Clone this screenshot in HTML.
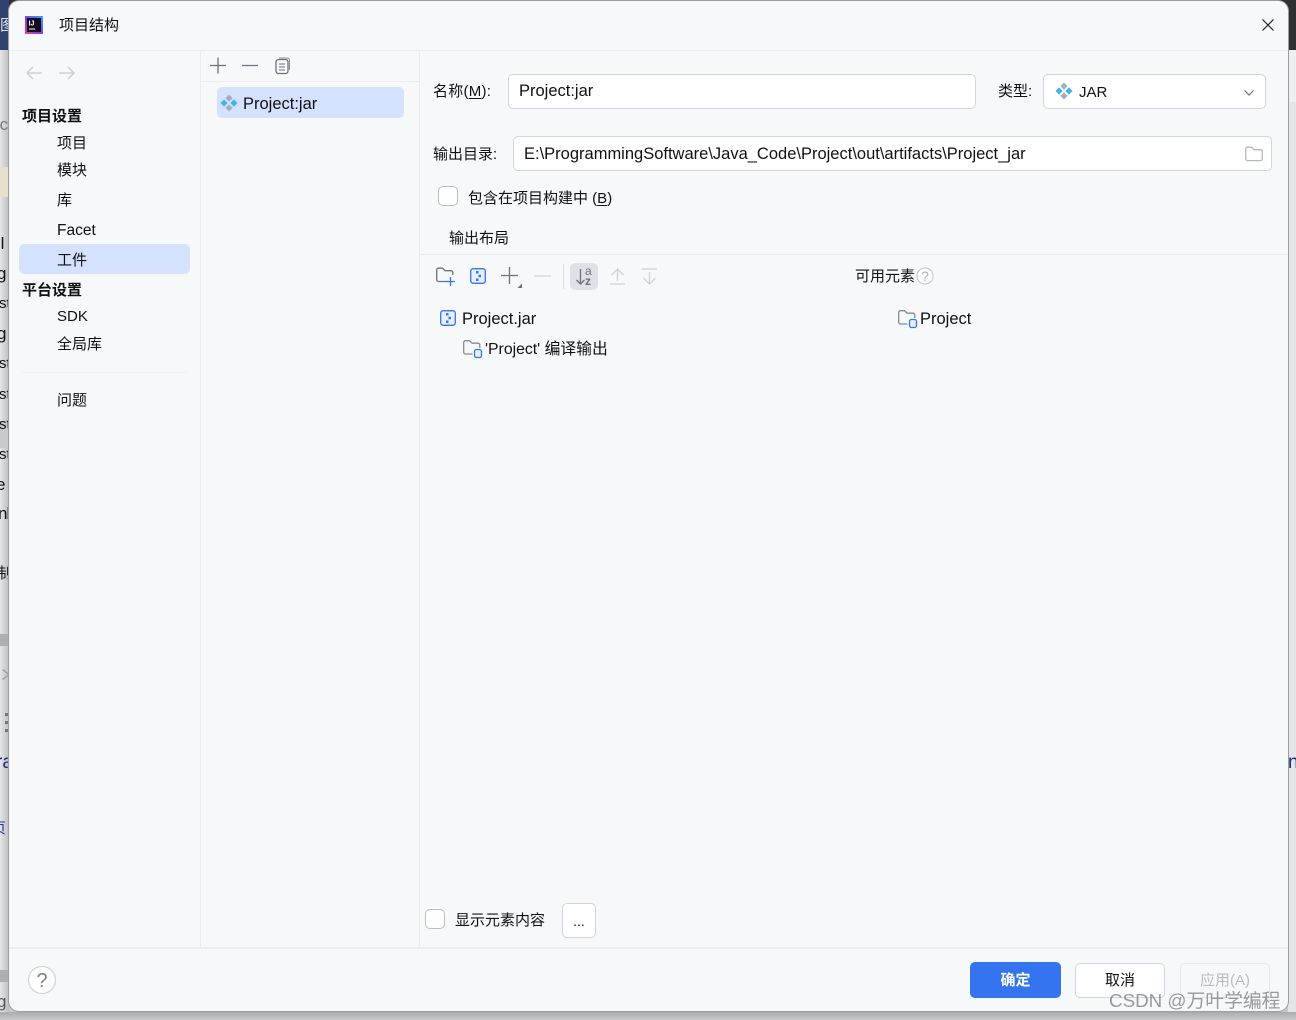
<!DOCTYPE html>
<html lang="zh"><head><meta charset="utf-8"><title>项目结构</title>
<style>
html,body{margin:0;padding:0;width:1296px;height:1020px;overflow:hidden;background:#c8c9cb;}
*{box-sizing:border-box;}
body{font-family:"Liberation Sans","Noto Sans CJK SC",sans-serif;font-size:15px;color:#111;position:relative;}
.a{position:absolute;white-space:nowrap;line-height:24px;}
.b{font-weight:700;}
.s{font-size:17px;}
.st{font-size:15px;left:-1px;width:10px;overflow:hidden;}
.box{position:absolute;background:#fff;border:1.5px solid #d3d5de;border-radius:5px;}
.ln{position:absolute;background:#ebecf0;}
svg{position:absolute;overflow:visible;fill:none;}
u{text-underline-offset:2px;}
</style></head><body>
<!-- background behind dialog -->
<div class="a" style="left:0;top:0;width:1296px;height:50px;background:#2f3034;"></div>
<div class="a" style="left:0;top:0;width:9px;height:50px;background:#2f4270;"></div>
<div class="a" style="left:0;top:50px;width:9px;height:970px;background:linear-gradient(90deg,#e6e6e8,#bcbdbf);"></div>
<div class="a" style="left:1288px;top:50px;width:8px;height:970px;background:#e4e5e8;"></div>
<div class="a" style="left:1288px;top:50px;width:8px;height:52px;background:#eeeff1;"></div>
<div class="a" style="left:1288px;top:122px;width:8px;height:50px;background:#e3e5e9;"></div>
<div class="a" style="left:0;top:1012px;width:1296px;height:8px;background:linear-gradient(180deg,#a9aaac,#c8c9cb);"></div>
<div class="a" style="left:0;top:167px;width:9px;height:30px;background:#e6e1cd;"></div>
<div class="a" style="left:0;top:422px;width:9px;height:26px;background:#c9cacc;"></div>
<div class="a" style="left:0;top:634px;width:9px;height:12px;background:#aeafb1;"></div>
<div class="a" style="left:0;top:970px;width:9px;height:12px;background:#aeafb1;"></div>
<div class="a" style="left:0;top:14px;font-size:15px;color:#dfe3ea;width:9px;overflow:hidden;">图</div>
<div class="a s" style="left:-6px;top:113px;color:#777;width:15px;overflow:hidden;">rc</div>
<div class="a s" style="left:-5px;top:232px;width:14px;overflow:hidden;">-l</div>
<div class="a s" style="left:-3px;top:262px;width:12px;overflow:hidden;">g</div>
<div class="a st" style="top:292px;">st</div>
<div class="a s" style="left:-3px;top:322px;width:12px;overflow:hidden;">g</div>
<div class="a st" style="top:352px;">st</div>
<div class="a st" style="top:383px;">st</div>
<div class="a st" style="top:413px;">st</div>
<div class="a st" style="top:443px;">st</div>
<div class="a s" style="left:-4px;top:473px;width:13px;overflow:hidden;">e</div>
<div class="a s" style="left:-2px;top:502px;width:11px;overflow:hidden;letter-spacing:-1px;">nl</div>
<div class="a" style="left:-3px;top:562px;width:12px;overflow:hidden;">制</div>
<svg style="left:2px;top:669px" width="7" height="11" viewBox="0 0 7 11"><path d="M.5.500L7 5.500.5 10.500" stroke="#9a9ba0" stroke-width="1.200"/></svg>
<div class="a" style="left:5px;top:713px;width:3px;height:3px;background:#777;box-shadow:0 8px #777,0 16px #777;"></div>
<div class="a" style="left:-4px;top:751px;width:13px;overflow:hidden;color:#1b2a80;font-size:19px;">ra</div>
<div class="a" style="left:-9px;top:817px;width:18px;overflow:hidden;color:#2a35a0;">页</div>
<div class="a" style="left:-3px;top:990px;width:12px;overflow:hidden;color:#555;font-size:17px;">g</div>
<div class="a" style="left:1288px;top:751px;width:8px;overflow:hidden;color:#1b2a80;font-size:19px;">n</div>

<!-- dialog -->
<div class="a" style="left:9px;top:1px;width:1279px;height:1010px;background:#f7f8fa;border-radius:10px;box-shadow:0 0 0 1px #9c9d9f;"></div>
<div class="ln" style="left:9px;top:50px;width:1279px;height:1px;"></div>
<div class="ln" style="left:200px;top:51px;width:1px;height:896px;"></div>
<div class="ln" style="left:419px;top:51px;width:1px;height:896px;"></div>
<div class="ln" style="left:201px;top:81px;width:218px;height:1px;"></div>
<div class="ln" style="left:420px;top:254px;width:868px;height:1px;"></div>
<div class="ln" style="left:9px;top:947px;width:1279px;height:2px;"></div>
<div class="ln" style="left:22px;top:372px;width:165px;height:1px;background:#eff0f3;"></div>

<!-- title bar -->
<svg style="left:25px;top:16px" width="18" height="18" viewBox="0 0 18 18">
<defs><linearGradient id="g" x1="0" y1="1" x2="1" y2="0"><stop offset="0" stop-color="#ff3d6e"/><stop offset=".45" stop-color="#7a3cf0"/><stop offset="1" stop-color="#2aa8ff"/></linearGradient></defs>
<rect width="18" height="18" fill="url(#g)"/><rect x="2" y="2" width="14" height="14" fill="#140a22"/>
<rect x="4" y="12.500" width="6" height="1" fill="#fff"/>
<text x="3.600" y="9.500" font-size="7" font-weight="700" fill="#fff" font-family="Liberation Sans">IJ</text></svg>
<div class="a" style="left:59px;top:14px;">项目结构</div>
<svg style="left:1262px;top:19px" width="12" height="12" viewBox="0 0 12 12"><path d="M.5.5l11 11M11.500.5l-11 11" stroke="#222" stroke-width="1.200"/></svg>

<!-- left nav -->
<svg style="left:26px;top:66px" width="50" height="14" viewBox="0 0 50 14"><path d="M1 7h15M7 1L1 7l6 6M33 7h15M42 1l6 6-6 6" stroke="#cdcfd3" stroke-width="1.500"/></svg>
<div class="a b" style="left:22px;top:105px;">项目设置</div>
<div class="a" style="left:57px;top:132px;">项目</div>
<div class="a" style="left:57px;top:159px;">模块</div>
<div class="a" style="left:57px;top:189px;">库</div>
<div class="a" style="left:57px;top:219px;font-size:15.500px;">Facet</div>
<div class="a" style="left:19px;top:244px;width:171px;height:30px;background:#d4e2ff;border-radius:5px;"></div>
<div class="a" style="left:57px;top:249px;">工件</div>
<div class="a b" style="left:22px;top:279px;">平台设置</div>
<div class="a" style="left:57px;top:305px;">SDK</div>
<div class="a" style="left:57px;top:333px;">全局库</div>
<div class="a" style="left:57px;top:389px;">问题</div>

<!-- middle column -->
<svg style="left:209px;top:57px" width="84" height="18" viewBox="0 0 84 18">
<path d="M9 .5v16M1 8.500h16M33 8.500h16" stroke="#6c707e" stroke-width="1.300"/>
<rect x="67" y="2.500" width="12" height="14" rx="2.500" stroke="#6c707e" stroke-width="1.300"/>
<path d="M70 7h6M70 10h6M70 13h6" stroke="#6c707e"/><path d="M70 1h8a2.500 2.500 0 0 1 2.500 2.500V13" stroke="#8b8e99"/></svg>
<div class="a" style="left:217px;top:87px;width:187px;height:31px;background:#d4e2ff;border-radius:5px;"></div>
<svg style="left:220px;top:94px" width="18" height="18" viewBox="0 0 18 18"><path d="M9 .5l3.600 3.600L9 7.700 5.400 4.100z" fill="#a8adbd"/><path d="M9 10.300l3.600 3.600L9 17.500l-3.600-3.600z" fill="#a8adbd"/><path d="M4.100 5.400l3.600 3.600-3.600 3.600L.5 9z" fill="#40b6e0"/><path d="M13.900 5.400L17.500 9l-3.600 3.600L10.300 9z" fill="#40b6e0"/></svg>
<div class="a" style="left:243px;top:92px;font-size:16.500px;">Project:jar</div>

<!-- form -->
<div class="a" style="left:433px;top:80px;letter-spacing:.25px;">名称(<u>M</u>):</div>
<div class="box" style="left:508px;top:74px;width:468px;height:35px;"></div>
<div class="a" style="left:519px;top:79px;font-size:16.500px;">Project:jar</div>
<div class="a" style="left:998px;top:80px;">类型:</div>
<div class="box" style="left:1043px;top:74px;width:223px;height:35px;"></div>
<svg style="left:1055px;top:82px" width="18" height="18" viewBox="0 0 18 18"><path d="M9 .5l3.600 3.600L9 7.700 5.400 4.100z" fill="#a8adbd"/><path d="M9 10.300l3.600 3.600L9 17.500l-3.600-3.600z" fill="#a8adbd"/><path d="M4.100 5.400l3.600 3.600-3.600 3.600L.5 9z" fill="#40b6e0"/><path d="M13.900 5.400L17.500 9l-3.600 3.600L10.300 9z" fill="#40b6e0"/></svg>
<div class="a" style="left:1079px;top:81px;font-size:15px;">JAR</div>
<svg style="left:1244px;top:90px" width="10" height="6" viewBox="0 0 10 6"><path d="M.5.500L5 5 9.500.500" stroke="#6c707e" stroke-width="1.200"/></svg>
<div class="a" style="left:433px;top:143px;">输出目录:</div>
<div class="box" style="left:513px;top:136px;width:759px;height:35px;"></div>
<div class="a" style="left:524px;top:142px;font-size:16.500px;">E:\ProgrammingSoftware\Java_Code\Project\out\artifacts\Project_jar</div>
<svg style="left:1245px;top:146px" width="18" height="16" viewBox="0 0 18 16"><path d="M.7 3A1.800 1.800 0 0 1 2.500 1.200h4L9 3.700h6.500a1.800 1.800 0 0 1 1.800 1.800v7.300a1.800 1.800 0 0 1-1.800 1.800h-13A1.800 1.800 0 0 1 .7 12.800z" stroke="#b4b8bf" stroke-width="1.300"/></svg>
<div class="box" style="left:438px;top:186px;width:20px;height:20px;border-color:#b9bdc9;"></div>
<div class="a" style="left:468px;top:187px;">包含在项目构建中 (<u>B</u>)</div>
<div class="a" style="left:449px;top:227px;">输出布局</div>

<!-- layout toolbar -->
<svg style="left:436px;top:267px" width="20" height="20" viewBox="0 0 20 20"><path d="M11 14.500H2.500A1.800 1.800 0 0 1 .7 12.700V3A1.800 1.800 0 0 1 2.500 1.200h4L9 3.700h6a1.800 1.800 0 0 1 1.800 1.800V8" stroke="#6c707e" stroke-width="1.300"/><path d="M14.500 10v9M10 14.500h9" stroke="#3574f0" stroke-width="1.300"/></svg>
<svg style="left:470px;top:268px" width="16" height="16" viewBox="0 0 16 16"><rect x=".7" y=".7" width="14.600" height="14.600" rx="2.500" fill="#e7effd" stroke="#3574f0" stroke-width="1.300"/><path d="M6 3h2.500v2.500H6zM8.500 6.800H11v2.500H8.500zM6 10.500h2.500V13H6z" fill="#3574f0"/></svg>
<svg style="left:501px;top:267px" width="22" height="22" viewBox="0 0 22 22"><path d="M8.500 0v17M0 8.500h17" stroke="#6c707e" stroke-width="1.300"/><path d="M21 16.500V21h-4.500z" fill="#6c707e"/></svg>
<svg style="left:534px;top:275px" width="17" height="2" viewBox="0 0 17 2"><path d="M0 1h17" stroke="#d3d5db" stroke-width="1.300"/></svg>
<div class="ln" style="left:563px;top:264px;width:1px;height:25px;background:#dcdee3;"></div>
<div class="a" style="left:570px;top:263px;width:28px;height:27px;background:#dfe1e5;border-radius:5px;"></div>
<svg style="left:576px;top:268px" width="18" height="18" viewBox="0 0 18 18"><path d="M4.500 1v15M.5 12l4 4 4-4" stroke="#6c707e" stroke-width="1.300"/></svg>
<div class="a" style="left:585px;top:266px;font-size:12px;line-height:10px;color:#6c707e;">a</div>
<div class="a" style="left:585px;top:276px;font-size:12px;line-height:10px;font-weight:700;color:#6c707e;">z</div>
<svg style="left:610px;top:268px" width="15" height="17" viewBox="0 0 15 17"><path d="M7.500 13V1M1.500 7l6-6 6 6M0 16h15" stroke="#d0d2d8" stroke-width="1.300"/></svg>
<svg style="left:642px;top:268px" width="15" height="17" viewBox="0 0 15 17"><path d="M7.500 4v12M1.500 10l6 6 6-6M0 1h15" stroke="#d0d2d8" stroke-width="1.300"/></svg>
<div class="a" style="left:855px;top:265px;">可用元素</div>
<svg style="left:916px;top:267px" width="18" height="18" viewBox="0 0 18 18"><circle cx="9" cy="9" r="8" stroke="#c9ccd6" stroke-width="1.200" fill="#fff"/></svg>
<div class="a" style="left:916px;top:264px;width:18px;text-align:center;font-size:14px;color:#aeb2bf;">?</div>

<!-- tree -->
<svg style="left:440px;top:310px" width="16" height="16" viewBox="0 0 16 16"><rect x=".7" y=".7" width="14.600" height="14.600" rx="2.500" fill="#e7effd" stroke="#3574f0" stroke-width="1.300"/><path d="M6 3h2.500v2.500H6zM8.500 6.800H11v2.500H8.500zM6 10.500h2.500V13H6z" fill="#3574f0"/></svg>
<div class="a" style="left:462px;top:307px;font-size:16.500px;">Project.jar</div>
<svg style="left:463px;top:339px" width="20" height="20" viewBox="0 0 20 20"><path d="M9.500 15H2.500A1.800 1.800 0 0 1 .7 13.200V3.500A1.800 1.800 0 0 1 2.500 1.700h4L9 4.200h6a1.800 1.800 0 0 1 1.800 1.800v3" stroke="#868a95" stroke-width="1.300"/><rect x="11.500" y="10.500" width="7" height="8" rx="2" fill="#e7effd" stroke="#3574f0" stroke-width="1.300"/></svg>
<div class="a" style="left:485px;top:338px;font-size:15.800px;">'Project' 编译输出</div>
<svg style="left:898px;top:309px" width="20" height="20" viewBox="0 0 20 20"><path d="M9.500 15H2.500A1.800 1.800 0 0 1 .7 13.200V3.500A1.800 1.800 0 0 1 2.500 1.700h4L9 4.200h6a1.800 1.800 0 0 1 1.800 1.800v3" stroke="#868a95" stroke-width="1.300"/><rect x="11.500" y="10.500" width="7" height="8" rx="2" fill="#e7effd" stroke="#3574f0" stroke-width="1.300"/></svg>
<div class="a" style="left:920px;top:307px;font-size:16.500px;">Project</div>

<!-- bottom -->
<div class="box" style="left:425px;top:909px;width:20px;height:20px;border-color:#b9bdc9;"></div>
<div class="a" style="left:455px;top:909px;">显示元素内容</div>
<div class="box" style="left:562px;top:903px;width:34px;height:35px;"></div>
<div class="a" style="left:562px;top:909px;width:34px;text-align:center;font-size:14px;">...</div>
<svg style="left:27px;top:965px" width="30" height="30" viewBox="0 0 30 30"><ellipse cx="15" cy="15" rx="13.500" ry="13.500" fill="#fff" stroke="#d3d5de" stroke-width="1.300"/></svg>
<div class="a" style="left:27px;top:969px;width:30px;text-align:center;font-size:20px;color:#7f838e;">?</div>
<div class="a" style="left:970px;top:962px;width:91px;height:36px;background:#3574f0;border-radius:5px;color:#fff;text-align:center;line-height:37px;font-weight:700;">确定</div>
<div class="box" style="left:1075px;top:963px;width:90px;height:35px;text-align:center;line-height:33px;">取消</div>
<div class="box" style="left:1180px;top:963px;width:90px;height:35px;background:#f7f8fa;border-color:#e6e7ea;text-align:center;line-height:33px;color:#b8bcc6;">应用(A)</div>
<div class="a" style="left:1109px;top:990px;font-size:18.800px;line-height:22px;color:rgba(90,90,90,.6);">CSDN @万叶学编程</div>
</body></html>
